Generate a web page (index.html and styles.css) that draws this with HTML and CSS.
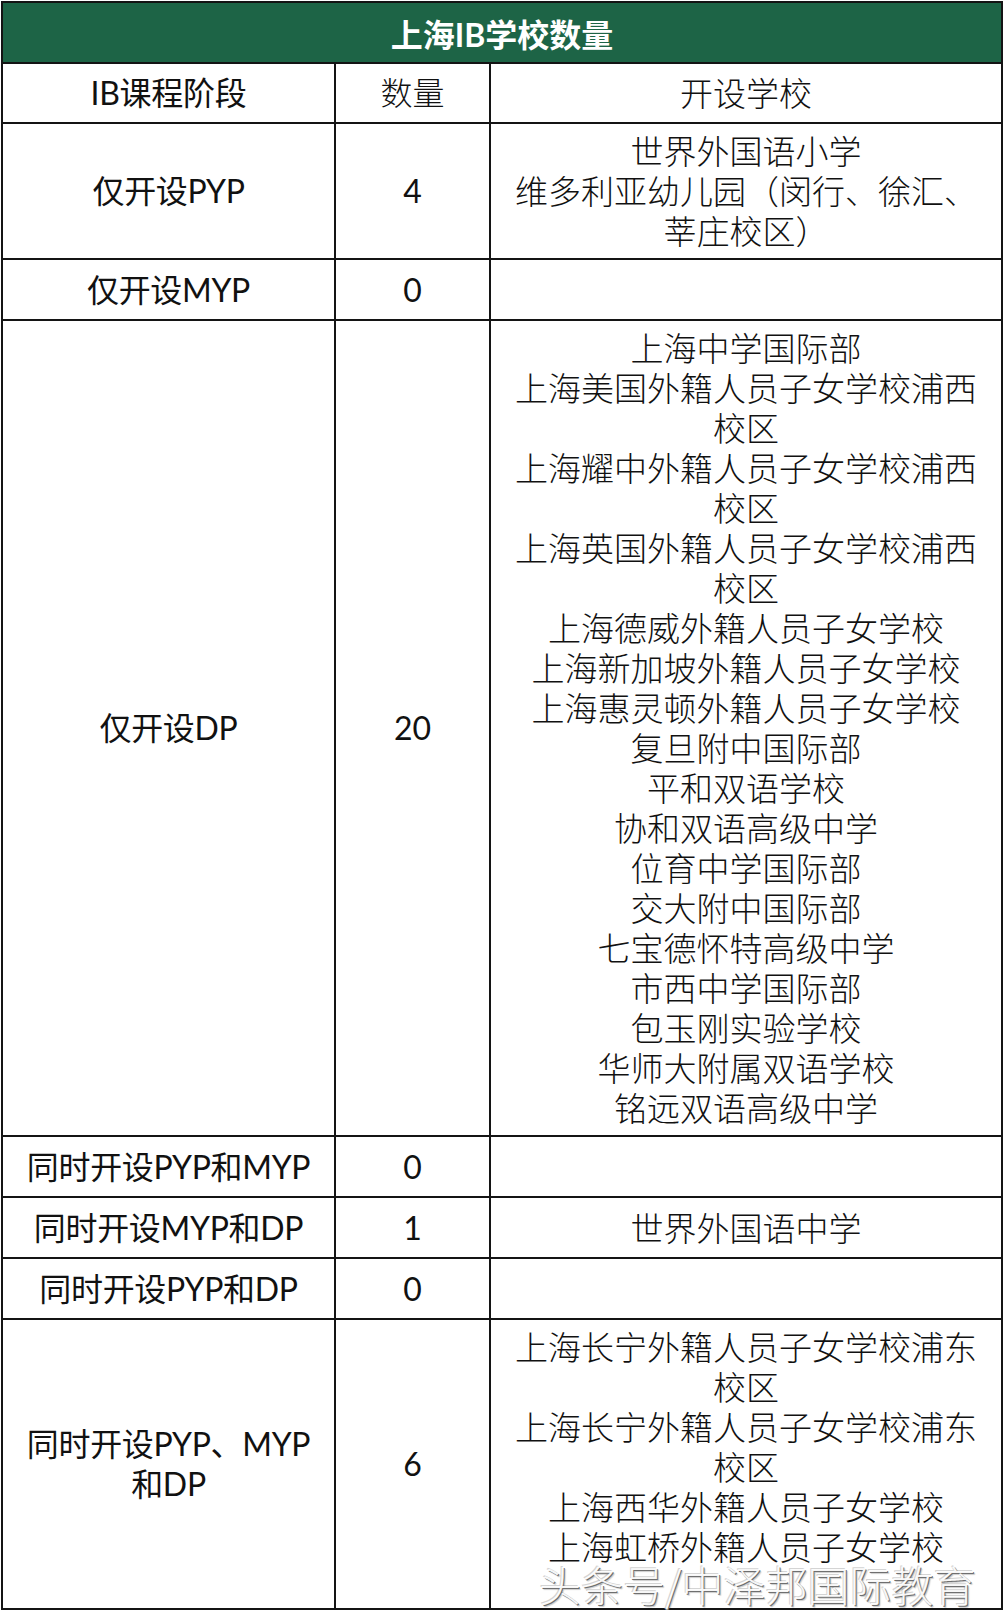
FILE: index.html
```html
<!DOCTYPE html>
<html lang="zh-CN">
<head>
<meta charset="utf-8">
<title>上海IB学校数量</title>
<link rel="stylesheet" href="styles.css">
</head>
<body>
<div class="page">
  <div class="sheet">
    <div class="title">上海IB学校数量</div>

    <div class="cell stage head">IB课程阶段</div>
    <div class="cell count head song">数量</div>
    <div class="cell schools head">开设学校</div>

    <div class="cell stage">仅开设PYP</div>
    <div class="cell count">4</div>
    <div class="cell schools">
      <p>世界外国语小学</p>
      <p>维多利亚幼儿园（闵行、徐汇、莘庄校区）</p>
    </div>

    <div class="cell stage">仅开设MYP</div>
    <div class="cell count">0</div>
    <div class="cell schools"></div>

    <div class="cell stage">仅开设DP</div>
    <div class="cell count">20</div>
    <div class="cell schools">
      <p>上海中学国际部</p>
      <p>上海美国外籍人员子女学校浦西校区</p>
      <p>上海耀中外籍人员子女学校浦西校区</p>
      <p>上海英国外籍人员子女学校浦西校区</p>
      <p>上海德威外籍人员子女学校</p>
      <p>上海新加坡外籍人员子女学校</p>
      <p>上海惠灵顿外籍人员子女学校</p>
      <p>复旦附中国际部</p>
      <p>平和双语学校</p>
      <p>协和双语高级中学</p>
      <p>位育中学国际部</p>
      <p>交大附中国际部</p>
      <p>七宝德怀特高级中学</p>
      <p>市西中学国际部</p>
      <p>包玉刚实验学校</p>
      <p>华师大附属双语学校</p>
      <p>铭远双语高级中学</p>
    </div>

    <div class="cell stage">同时开设PYP和MYP</div>
    <div class="cell count">0</div>
    <div class="cell schools"></div>

    <div class="cell stage">同时开设MYP和DP</div>
    <div class="cell count">1</div>
    <div class="cell schools">
      <p>世界外国语中学</p>
    </div>

    <div class="cell stage">同时开设PYP和DP</div>
    <div class="cell count">0</div>
    <div class="cell schools"></div>

    <div class="cell stage last">同时开设PYP、MYP和DP</div>
    <div class="cell count last">6</div>
    <div class="cell schools last">
      <p>上海长宁外籍人员子女学校浦东校区</p>
      <p>上海长宁外籍人员子女学校浦东校区</p>
      <p>上海西华外籍人员子女学校</p>
      <p>上海虹桥外籍人员子女学校</p>
    </div>
  </div>
  <div class="watermark">头条号/中泽邦国际教育</div>
</div>
</body>
</html>
```

FILE: styles.css
```css
* {
  box-sizing: border-box;
}

body {
  margin: 0;
  background: #ffffff;
}

.page {
  position: relative;
  width: 1005px;
  padding: 1px 0 0 1px;
}

.sheet {
  display: grid;
  grid-template-columns: 333px 155px 510px;
  width: 1002px;
  border: 2px solid #141414;
  font-family: "Lato", "Noto Sans CJK SC", sans-serif;
  color: #111111;
}

.title {
  grid-column: 1 / -1;
  height: 61px;
  display: flex;
  align-items: center;
  justify-content: center;
  background: #1d6446;
  color: #ffffff;
  font-weight: 700;
  font-size: 32px;
  border-bottom: 2px solid #141414;
}

.cell {
  display: flex;
  flex-direction: column;
  justify-content: center;
  align-items: center;
  text-align: center;
  min-height: 61px;
  padding: 7px 0;
  border-bottom: 2px solid #141414;
  font-size: 32px;
  line-height: 40px;
}

.stage,
.count {
  border-right: 2px solid #141414;
}

.stage {
  padding: 7px 12px;
  letter-spacing: -0.3px;
}

.head {
  min-height: 60px;
}

.song {
  font-weight: 300;
}

.schools {
  padding: 7px 20px;
  font-weight: 300;
  font-size: 33px;
}

.schools p {
  margin: 0;
}

.last {
  border-bottom: none;
  min-height: 288px;
}

.schools.last {
  justify-content: flex-start;
}

.watermark {
  position: absolute;
  left: 539px;
  top: 1563px;
  font-family: "Noto Sans CJK SC", sans-serif;
  font-weight: 300;
  font-size: 42px;
  line-height: 42px;
  white-space: nowrap;
  color: rgba(255, 255, 255, 0.95);
  text-shadow: 1px 1px 0 #6f6f6f, 2px 2px 1px rgba(0, 0, 0, 0.2), -1px -1px 0 #d4d4d4;
}
```
